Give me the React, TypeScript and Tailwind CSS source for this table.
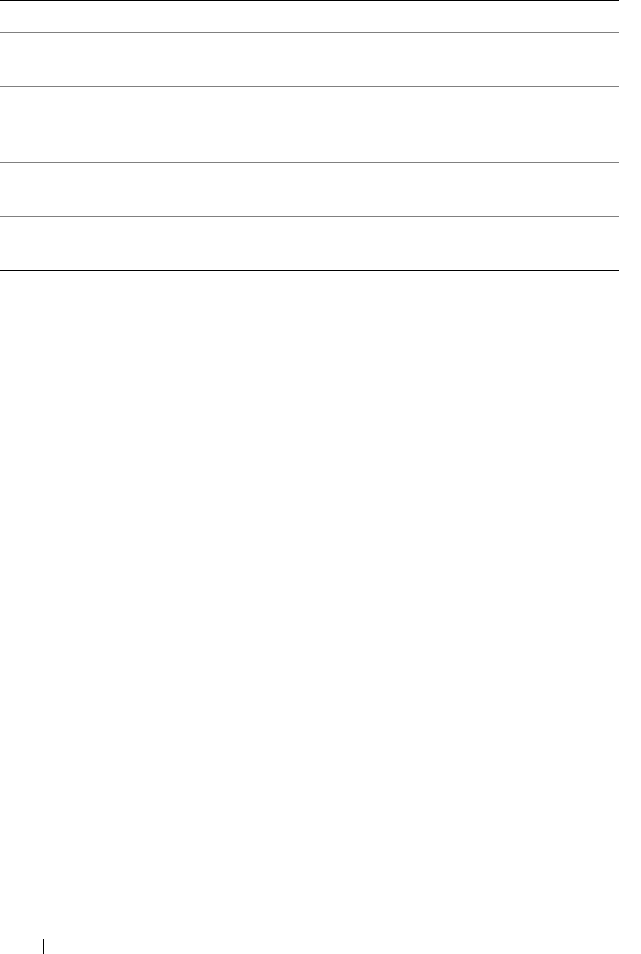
const rows = [
  { h: "h-[31px]" },
  { h: "h-[54px]" },
  { h: "h-[76px]" },
  { h: "h-[54px]" },
  { h: "h-[54px]" },
];

export default function App() {
  return (
    <div className="flex h-[954px] flex-col bg-white font-['Liberation_Sans',sans-serif]">
      <div className="w-[619px] border-t border-b border-black">
        {rows.map((r, i) => (
          <div
            key={i}
            className={`${r.h} ${i > 0 ? "border-t border-[#808080]" : ""}`}
          />
        ))}
      </div>
      <div className="mt-auto flex h-[15px] pl-[43px]">
        <div className="w-px bg-black" />
      </div>
    </div>
  );
}
